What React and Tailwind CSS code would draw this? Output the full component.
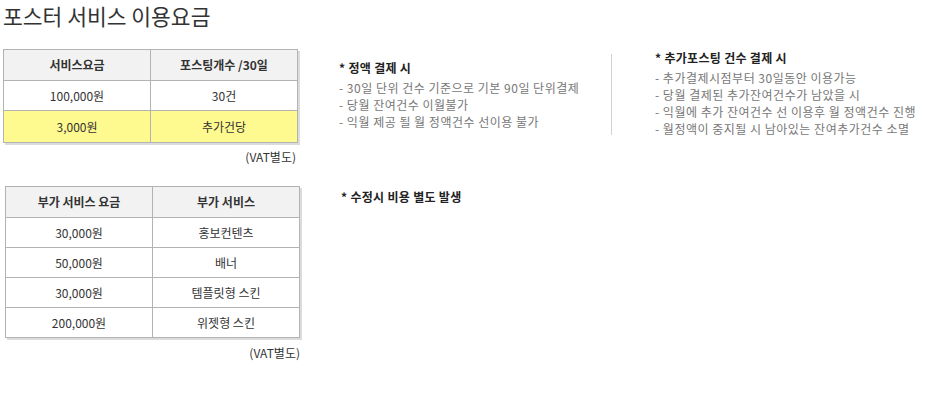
const font = { fontFamily: '"Noto Sans CJK KR", "Noto Sans", sans-serif' };

const baseRows = [
  ['100,000원', '30건'],
];

const extraRows = [
  ['30,000원', '홍보컨텐츠'],
  ['50,000원', '배너'],
  ['30,000원', '템플릿형 스킨'],
  ['200,000원', '위젯형 스킨'],
];

const PriceTable = ({ head, rows, highlight, className }) => (
  <table className={`w-[295px] border-collapse text-[12px] text-[#333] shadow-[2px_2px_0_#dcdcdc] ${className || ''}`}>
    <thead>
      <tr className="bg-[#f2f2f2] h-[31px]">
        {head.map((h) => (
          <th key={h} className="w-1/2 border border-[#b3b3b3] font-bold text-center">{h}</th>
        ))}
      </tr>
    </thead>
    <tbody>
      {rows.map((r, i) => (
        <tr key={i} className="h-[30px] bg-white">
          <td className="border border-[#b3b3b3] text-center">{r[0]}</td>
          <td className="border border-[#b3b3b3] text-center">{r[1]}</td>
        </tr>
      ))}
      {highlight && (
        <tr className="h-[32px] bg-[#fffa8f]">
          <td className="border border-[#b3b3b3] text-center">{highlight[0]}</td>
          <td className="border border-[#b3b3b3] text-center">{highlight[1]}</td>
        </tr>
      )}
    </tbody>
  </table>
);

const Note = ({ title, items }) => (
  <div>
    <p className="text-[12px] font-bold text-[#222] leading-[17px] tracking-[0.3px]">* {title}</p>
    <ul className="mt-[3px] text-[12px] text-[#777] leading-[17px] tracking-[0.5px]">
      {items.map((t) => (
        <li key={t}>- {t}</li>
      ))}
    </ul>
  </div>
);

export default function App() {
  return (
    <div className="w-[928px] h-[400px] bg-white overflow-hidden" style={font}>
      <h1 className="pl-[3px] pt-[2px] text-[21.5px] leading-[27px] text-[#333]">포스터 서비스 이용요금</h1>

      <div className="flex mt-[20px]">
        {/* left: price tables */}
        <div className="w-[300px] pl-[3px]">
          <PriceTable
            head={['서비스요금', '포스팅개수 /30일']}
            rows={baseRows}
            highlight={['3,000원', '추가건당']}
          />
          <p className="w-[295px] text-right text-[12px] text-[#333] mt-[5px] leading-[17px] pr-[2px]">(VAT별도)</p>

          <PriceTable
            head={['부가 서비스 요금', '부가 서비스']}
            rows={extraRows}
            className="mt-[21px] ml-[2px]"
          />
          <p className="w-[297px] text-right text-[12px] text-[#333] mt-[6px] leading-[17px]">(VAT별도)</p>
        </div>

        {/* middle */}
        <div className="ml-[39px] w-[272px] pt-[10px]">
          <Note
            title="정액 결제 시"
            items={[
              '30일 단위 건수 기준으로 기본 90일 단위결제',
              '당월 잔여건수 이월불가',
              '익월 제공 될 월 정액건수 선이용 불가',
            ]}
          />
          <p className="mt-[58px] text-[12px] font-bold text-[#222] leading-[17px] pl-[2px] tracking-[0.3px]">* 수정시 비용 별도 발생</p>
        </div>

        {/* right */}
        <div className="flex items-start">
          <div className="w-px h-[81px] bg-[#d0d0d0] mt-[5px]" />
          <div className="ml-[43px]">
            <Note
              title="추가포스팅 건수 결제 시"
              items={[
                '추가결제시점부터 30일동안 이용가능',
                '당월 결제된 추가잔여건수가 남았을 시',
                '익월에 추가 잔여건수 선 이용후 월 정액건수 진행',
                '월정액이 중지될 시 남아있는 잔여추가건수 소멸',
              ]}
            />
          </div>
        </div>
      </div>
    </div>
  );
}
